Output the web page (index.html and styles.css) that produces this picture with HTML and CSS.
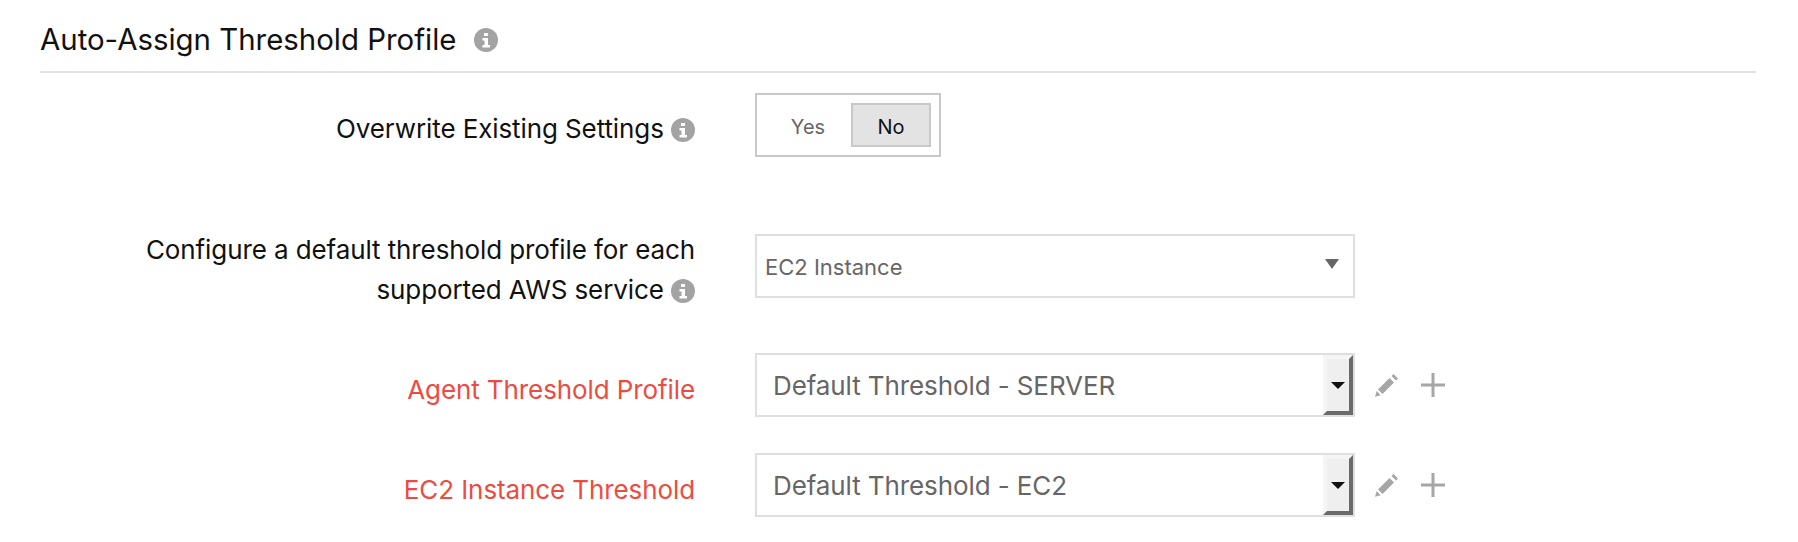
FILE: index.html
```html
<!DOCTYPE html>
<html lang="en">
<head>
<meta charset="utf-8">
<title>Auto-Assign Threshold Profile</title>
<link rel="stylesheet" href="styles.css">
</head>
<body>
<main class="page">
  <h2 class="title">Auto-Assign Threshold Profile
    <svg class="info info-title" viewBox="0 0 24 24"><circle cx="12" cy="12" r="12" fill="#a3a3a3"/><path d="M10 5h4v3h-4zM8.500 10h5.500v7h2v2.500H8.500V17h2v-4.500h-2z" fill="#fff"/></svg>
  </h2>
  <div class="row row-toggle">
    <div class="label">Overwrite Existing Settings <svg class="info" viewBox="0 0 24 24"><circle cx="12" cy="12" r="12" fill="#a3a3a3"/><path d="M10 5h4v3h-4zM8.500 10h5.500v7h2v2.500H8.500V17h2v-4.500h-2z" fill="#fff"/></svg></div>
    <div class="toggle"><span class="opt opt-off">Yes</span><span class="opt opt-on">No</span></div>
  </div>
  <div class="row row-service">
    <div class="label label-wrap">Configure a default threshold profile for each<br>supported AWS service <svg class="info" viewBox="0 0 24 24"><circle cx="12" cy="12" r="12" fill="#a3a3a3"/><path d="M10 5h4v3h-4zM8.500 10h5.500v7h2v2.500H8.500V17h2v-4.500h-2z" fill="#fff"/></svg></div>
    <div class="select select-flat"><span class="flat-value">EC2 Instance</span><i class="caret"></i></div>
  </div>
  <div class="row row-agent">
    <div class="label label-req">Agent Threshold Profile</div>
    <div class="select"><span class="value">Default Threshold - SERVER</span><span class="drop"><i class="caret-dark"></i></span></div>
    <svg class="pencil" viewBox="0 0 24 24"><path d="M0 23.700L1.700 18l4 4.300zM3 16.500L14.500 5l4.500 4.500L7.500 21zM16.500 3l2-2L23 5.500l-2 2z" fill="#a6a6a6"/></svg>
    <svg class="plus" viewBox="0 0 24 24"><path d="M10.500 0h3v10.500H24v3H13.500V24h-3V13.500H0v-3h10.500z" fill="#a6a6a6"/></svg>
  </div>
  <div class="row row-ec2">
    <div class="label label-req">EC2 Instance Threshold</div>
    <div class="select"><span class="value">Default Threshold - EC2</span><span class="drop"><i class="caret-dark"></i></span></div>
    <svg class="pencil" viewBox="0 0 24 24"><path d="M0 23.700L1.700 18l4 4.300zM3 16.500L14.500 5l4.500 4.500L7.500 21zM16.500 3l2-2L23 5.500l-2 2z" fill="#a6a6a6"/></svg>
    <svg class="plus" viewBox="0 0 24 24"><path d="M10.500 0h3v10.500H24v3H13.500V24h-3V13.500H0v-3h10.500z" fill="#a6a6a6"/></svg>
  </div>
</main>
</body>
</html>
```

FILE: styles.css
```css
* { box-sizing: border-box; }
html, body { margin: 0; background: #fff; }
body { font-family: "Inter", "Liberation Sans", sans-serif; color: #111; height: 542px; overflow: hidden; }
.page { padding: 0 42px 0 40px; }
.title {
  margin: 0; height: 73px; padding-top: 9px;
  font-size: 29.400px; line-height: 40px; font-weight: 400; color: #111;
  border-bottom: 2px solid #e3e3e3;
  display: flex; align-items: center;
}
.info { width: 24px; height: 24px; display: inline-block; vertical-align: -4px; }
.info-title { margin-left: 18px; }
.row { display: flex; align-items: center; }
.label {
  width: 655px; flex: none; margin-right: 60px; padding-top: 8px;
  text-align: right; font-size: 26px; letter-spacing: -0.100px; line-height: 40px; color: #111;
}
.label-req { color: #ee4b40; padding-top: 10px; }
.row-toggle { margin-top: 20px; height: 64px; }
.row-service { margin-top: 77px; height: 64px; }
.row-agent { margin-top: 55px; height: 64px; }
.row-ec2 { margin-top: 36px; height: 64px; }
.toggle {
  width: 186px; height: 64px; border: 2px solid #c8c8c8;
  display: flex; justify-content: flex-end; align-items: center; padding-right: 8px;
  font-size: 20px;
}
.opt { width: 80px; height: 44px; display: flex; align-items: center; justify-content: center; color: #666; border: 2px solid transparent; padding-top: 4px; }
.opt-off { margin-right: 3px; }
.opt-on { background: #e3e3e3; border-color: #c8c8c8; color: #111; }
.select {
  width: 600px; height: 64px; border: 2px solid #dfdfdf; flex: none;
  display: flex; align-items: center; justify-content: space-between;
  color: #666;
}
.select-flat { padding: 0 14px 0 8px; font-size: 22px; }
.flat-value { padding-top: 2px; }
.value { padding-left: 16px; font-size: 26px; letter-spacing: -0.100px; }
.caret { width: 0; height: 0; border-left: 7px solid transparent; border-right: 7px solid transparent; border-top: 10px solid #666; margin-top: -4px; }
.drop {
  width: 30px; height: 60px; flex: none;
  border-style: solid; border-width: 4px;
  border-color: #f5f5f5 #6a6a6a #6a6a6a #f5f5f5;
  background: #efefef;
  display: flex; align-items: center; justify-content: center;
}
.caret-dark { width: 0; height: 0; border-left: 7px solid transparent; border-right: 7px solid transparent; border-top: 7px solid #111; }
.pencil { width: 24px; height: 24px; margin-left: 20px; flex: none; }
.plus { width: 24px; height: 24px; margin-left: 22px; flex: none; }
```
